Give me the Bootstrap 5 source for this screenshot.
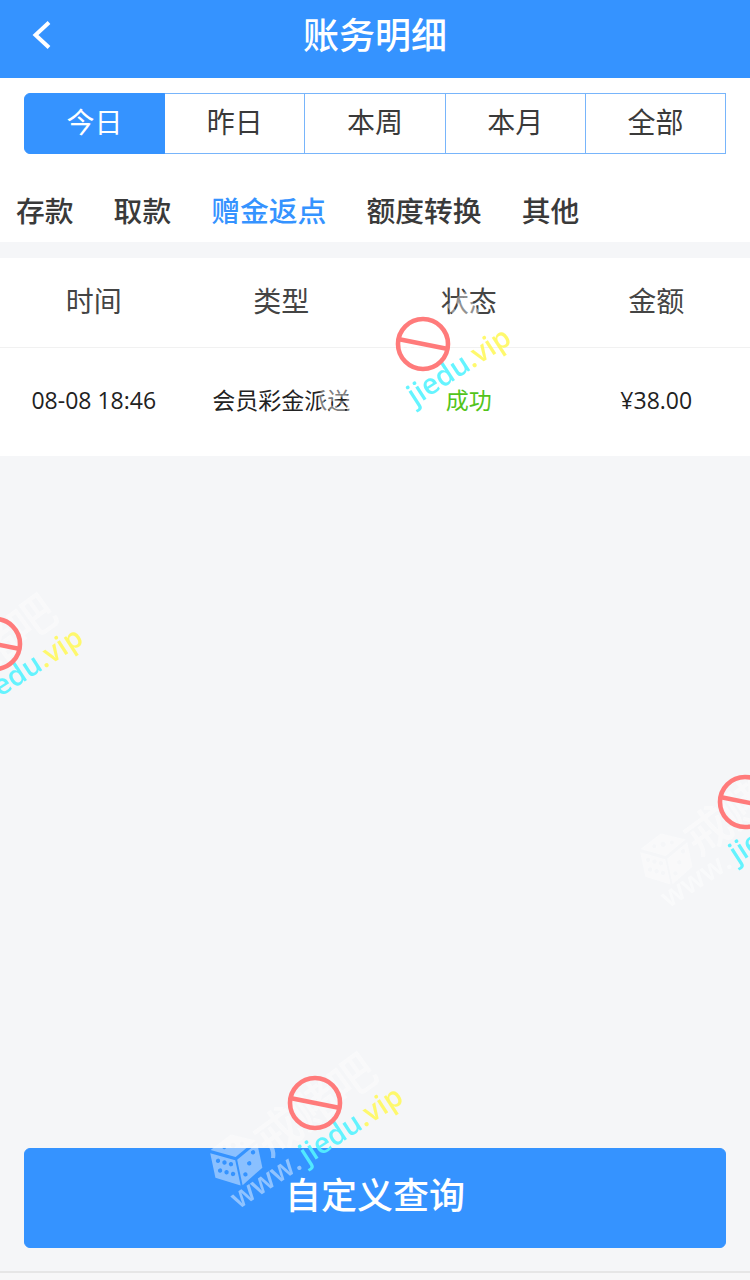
<!DOCTYPE html>
<html lang="zh-CN">
<head>
    <meta charset="UTF-8" />
    <meta name="viewport" content="width=device-width, initial-scale=1.0"/>
    <title>账务明细</title>
    <link href="https://cdn.jsdelivr.net/npm/bootstrap@5.3.0/dist/css/bootstrap.min.css" rel="stylesheet">
    <style>
        body {
            margin: 0;
            background: #f5f6f8;
            font-family: "Noto Sans CJK SC", "Liberation Sans", sans-serif;
        }
        .page-wrap {
            position: relative;
            width: 750px;
            height: 1280px;
            overflow: hidden;
        }
        .top-bar {
            height: 78px;
            padding-bottom: 12px;
            background: #3593ff;
            color: #fff;
            font-size: 36px;
            font-weight: 500;
        }
        .back-link {
            left: 32px;
            top: 20px;
            line-height: 0;
        }
        .range-box {
            padding: 15px 24px 0;
        }
        .range-box .btn {
            height: 61px;
            width: 20%;
            padding: 0 0 6px;
            font-size: 28px;
            color: #3a3a3a;
            background: #fff;
            border-color: #78b5fb;
            border-radius: 0;
        }
        .range-box .btn.active {
            color: #fff;
            background: #3593ff;
            border-color: #3593ff;
            border-radius: 6px 0 0 6px;
        }
        .cat-row {
            height: 88px;
            padding: 24px 0 0 16px;
            gap: 40px;
            font-size: 28.8px;
            font-weight: 500;
            color: #3a3a3a;
        }
        .cat-row .on {
            color: #3593ff;
        }
        .bill-table {
            margin-top: 16px;
            height: 198px;
        }
        .bill-head {
            height: 90px;
            padding-bottom: 6px;
            font-size: 28px;
            color: #444;
            border-bottom: 1px solid #f1f1f1;
        }
        .bill-line {
            height: 108px;
            padding-bottom: 4px;
            font-family: "Open Sans", "Noto Sans CJK SC", sans-serif;
            font-size: 23px;
            color: #222;
        }
        .ok-text {
            color: #52c41a;
        }
        .query-btn {
            margin: auto 24px 23px;
            height: 100px;
            padding-bottom: 16px;
            font-size: 36px;
            font-weight: 500;
            background: #3593ff;
            border-color: #3593ff;
            border-radius: 6px;
        }
        .foot-line {
            height: 9px;
            background: #f7f7f8;
            border-top: 2px solid #e6e6e6;
        }
        .wm-layer {
            position: absolute;
            left: 0;
            top: 0;
            pointer-events: none;
        }
        .wm-cn {
            font-size: 46px;
            font-weight: 500;
            fill: #fff;
            opacity: .42;
        }
        .wm-url {
            font-family: "Open Sans", sans-serif;
            font-size: 28.5px;
            font-weight: 600;
        }
    </style>
</head>
<body>
<div class="page-wrap d-flex flex-column">
    <div class="top-bar position-relative d-flex align-items-center justify-content-center flex-shrink-0">
        <a class="back-link position-absolute" href="#">
            <svg width="20" height="30" viewBox="0 0 20 30"><path d="M17 2.5 3.5 15 17 27.5" fill="none" stroke="#fff" stroke-width="4"/></svg>
        </a>
        账务明细
    </div>

    <div class="bg-white flex-shrink-0">
        <div class="range-box">
            <div class="btn-group w-100">
                <button class="btn active">今日</button>
                <button class="btn">昨日</button>
                <button class="btn">本周</button>
                <button class="btn">本月</button>
                <button class="btn">全部</button>
            </div>
        </div>
        <div class="cat-row d-flex align-items-center">
            <span>存款</span>
            <span>取款</span>
            <span class="on">赠金返点</span>
            <span>额度转换</span>
            <span>其他</span>
        </div>
    </div>

    <div class="bill-table bg-white flex-shrink-0">
        <div class="bill-head row g-0 text-center align-items-center">
            <div class="col-3">时间</div>
            <div class="col-3">类型</div>
            <div class="col-3">状态</div>
            <div class="col-3">金额</div>
        </div>
        <div class="bill-line row g-0 text-center align-items-center">
            <div class="col-3">08-08 18:46</div>
            <div class="col-3">会员彩金派送</div>
            <div class="col-3 ok-text">成功</div>
            <div class="col-3">¥38.00</div>
        </div>
    </div>

    <button class="query-btn btn btn-primary">自定义查询</button>
    <div class="foot-line flex-shrink-0"></div>

    <!-- watermark repeated over the page -->
    <svg class="wm-layer" width="750" height="1280" viewBox="0 0 750 1280">
        <defs>
            <mask id="diceMask" maskUnits="userSpaceOnUse" x="-30" y="-30" width="60" height="60">
                <path d="M0-25 23-14 0-2-23-14Z" fill="#fff"/>
                <path d="M-24-11-1 1V27L-24 14Z" fill="#fff"/>
                <path d="M24-11 1 1V27L24 14Z" fill="#fff"/>
                <g fill="#000">
                    <circle cx="0" cy="-14" r="2.6"/>
                    <circle cx="-9" cy="-14" r="2"/>
                    <circle cx="9" cy="-14" r="2"/>
                    <circle cx="-18" cy="-2" r="2.2"/>
                    <circle cx="-12" cy="1" r="2.2"/>
                    <circle cx="-6" cy="4" r="2.2"/>
                    <circle cx="-18" cy="8" r="2.2"/>
                    <circle cx="-12" cy="11" r="2.2"/>
                    <circle cx="-6" cy="14" r="2.2"/>
                    <circle cx="18" cy="-3" r="2.2"/>
                    <circle cx="12" cy="7" r="2.2"/>
                    <circle cx="6" cy="17" r="2.2"/>
                </g>
            </mask>
            <g id="wmMark">
                <g transform="translate(-79 56) rotate(-12)">
                    <rect x="-30" y="-30" width="60" height="60" fill="#fff" opacity=".42" mask="url(#diceMask)"/>
                </g>
                <text class="wm-cn" transform="translate(-46 56) rotate(-36)">戒赌吧</text>
                <g transform="translate(-8 62) rotate(-33)">
                    <text class="wm-url" x="-4" text-anchor="end" fill="#fff" opacity=".45">www.</text>
                    <text class="wm-url" opacity=".9"><tspan fill="#55f3ff">jiedu</tspan><tspan fill="#fff95e">.vip</tspan></text>
                </g>
                <circle r="25" fill="none" stroke="#ff7b7b" stroke-width="4.6"/>
                <path d="M-25-5 25 5" stroke="#ff7b7b" stroke-width="4.6"/>
            </g>
        </defs>
        <use href="#wmMark" x="423" y="344"/>
        <use href="#wmMark" x="-5" y="644"/>
        <use href="#wmMark" x="745" y="802"/>
        <use href="#wmMark" x="315" y="1103"/>
    </svg>
</div>
<script src="https://cdn.jsdelivr.net/npm/bootstrap@5.3.0/dist/js/bootstrap.bundle.min.js"></script>
</body>
</html>
